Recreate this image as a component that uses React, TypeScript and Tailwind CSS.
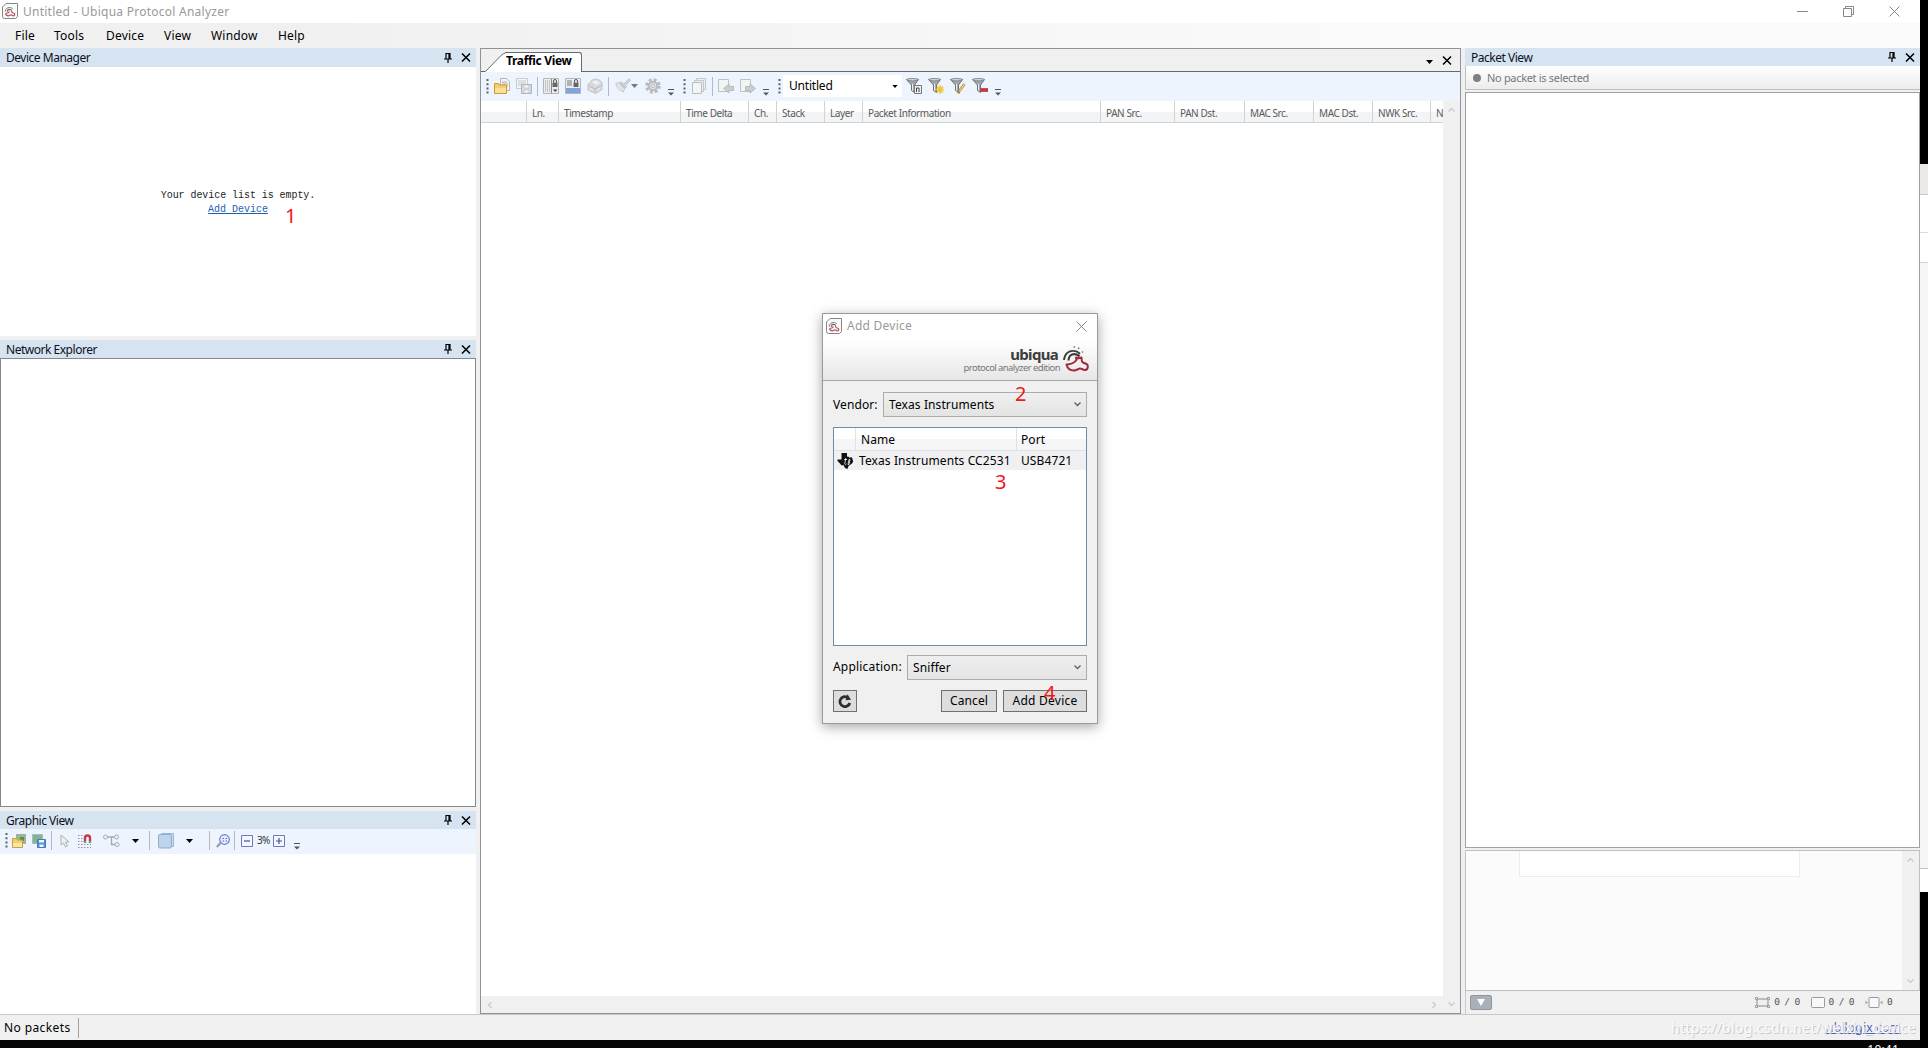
import type { ReactNode } from "react";
import { clsx } from "clsx";

// ─── Data ───────────────────────────────────────────────────────────────────

const MENU = [
  { label: "File", className: "w-[39px]" },
  { label: "Tools", className: "w-[52px]" },
  { label: "Device", className: "w-[58px]" },
  { label: "View", className: "w-[47px]" },
  { label: "Window", className: "w-[67px]" },
  { label: "Help", className: "w-[40px]" },
];

const COLUMNS = [
  { label: "", className: "w-[46px]" },
  { label: "Ln.", className: "w-[32px]" },
  { label: "Timestamp", className: "w-[122px]" },
  { label: "Time Delta", className: "w-[68px]" },
  { label: "Ch.", className: "w-[28px]" },
  { label: "Stack", className: "w-[48px]" },
  { label: "Layer", className: "w-[38px]" },
  { label: "Packet Information", className: "w-[238px]" },
  { label: "PAN Src.", className: "w-[74px]" },
  { label: "PAN Dst.", className: "w-[70px]" },
  { label: "MAC Src.", className: "w-[69px]" },
  { label: "MAC Dst.", className: "w-[59px]" },
  { label: "NWK Src.", className: "w-[58px]" },
];

// ─── Icons ──────────────────────────────────────────────────────────────────

function Svg({
  w = 16,
  h = 16,
  className,
  children,
}: {
  w?: number;
  h?: number;
  className?: string;
  children: ReactNode;
}) {
  return (
    <svg
      width={w}
      height={h}
      viewBox={`0 0 ${String(w)} ${String(h)}`}
      fill="none"
      className={clsx("block shrink-0", className)}
    >
      {children}
    </svg>
  );
}

function AppIcon() {
  return (
    <Svg>
      <path d="M4 .5h11.500v13l-2 2h-11a2 2 0 0 1-2-2V4z" fill="#fafafa" stroke="#8a8284" />
      <path d="M3.200 8.500c.3-2.500 2-4 4.300-4 1.500 0 2.500.5 3.300 1.500" stroke="#777" />
      <path d="M5.300 8.800c0-1.500 1-2.500 2.300-2.500 1 0 1.700.5 2 1.200" stroke="#666" strokeWidth="1.200" />
      <path
        d="M3.500 10.500c2 0 3-.3 4-1.800M9.500 7.500c.2 1.200 0 1.700 1 2.200l1.800.8c.8.600.5 2.300-.8 2.300-1.200 0-1.500-1-2.500-1s-1.500 1-2.700 1c-1.500 0-2.500-1-2.800-2.300"
        stroke="#b65562"
        strokeWidth="1.200"
      />
    </Svg>
  );
}

function UbiquaLogo() {
  return (
    <Svg w={28} h={28}>
      <path d="M7.500 3.500h.1M11.500 2h2M16 3l1.500.6M20 6.500l1.500 1.500" stroke="#777" strokeWidth="1.500" strokeDasharray="1.500 1" />
      <path d="M2 15C2.500 8.500 7 5.500 11.500 5.800c3 .1 5 1.200 6.500 3" stroke="#3b3b3b" strokeWidth="1.800" />
      <path d="M6.500 15.500c0-4 2.500-6.300 6-6.300 2.300 0 4 1 5 2.300" stroke="#3b3b3b" strokeWidth="2.200" />
      <path
        d="M4.500 19.500c4.500-.3 7.500-1.300 10-4.500l-.5-2.500c1.500.8 3.500.8 5.500 0 .5 2-.5 4 1.500 5l3.500 1.500c2.200 1.200 1.700 5.500-1.300 6-2.500.3-3.200-1.500-5.200-1.500s-3 2-6 2c-4 0-6.500-2-7.500-6z"
        stroke="#a02838"
        strokeWidth="2"
        strokeLinejoin="round"
      />
    </Svg>
  );
}

function PinIcon() {
  return (
    <Svg w={8} h={10} className="mr-[9px]">
      <path d="M2 .5h4v5M2 0v6M0 6h8M4 6v4M5 .5v5" stroke="#000" strokeWidth="1.200" />
    </Svg>
  );
}

function CloseIcon() {
  return (
    <Svg w={10} h={9}>
      <path d="M1 .5l8 8M9 .5l-8 8" stroke="#000" strokeWidth="1.500" />
    </Svg>
  );
}

function Grip({ className }: { className?: string }) {
  return (
    <Svg w={3} h={15} className={className}>
      <path d="M1.500 0v15" stroke="#5d626a" strokeWidth="2" strokeDasharray="2 2.200" />
    </Svg>
  );
}

function Overflow({ className }: { className?: string }) {
  return (
    <Svg w={6} h={7} className={clsx("mt-3", className)}>
      <path d="M0 .5h6" stroke="#555" />
      <path d="M0 3.500h6L3 6.500z" fill="#555" />
    </Svg>
  );
}

function Divider({ className }: { className?: string }) {
  return <div className={clsx("h-[19px] w-px shrink-0 bg-[#b5b9c0]", className)} />;
}

function Caret({ className, color = "#000" }: { className?: string; color?: string }) {
  return (
    <Svg w={7} h={4} className={className}>
      <path d="M0 0h7L3.500 4z" fill={color} />
    </Svg>
  );
}

function OpenIcon() {
  return (
    <Svg className="mr-[6px]">
      <path d="M6.500.5h6l3 3v9h-9z" fill="#f4f4f4" stroke="#b4b4b4" />
      <path d="M8 4h5M8 6h6M8 8h6" stroke="#aaa" />
      <path d="M.5 5.500h4l1 1.500h7v8.500H.5z" fill="#f3ce6b" stroke="#cf9a36" />
      <path d="M1 10h11v5H1z" fill="#fae096" />
    </Svg>
  );
}

function SaveAllIcon() {
  return (
    <Svg className="opacity-70">
      <path d="M.5.5h11v10H.5z" fill="#f5f5f5" stroke="#bbb" />
      <path d="M2 3h8M2 5h8M2 7h8" stroke="#b5b5b5" />
      <path d="M5.500 6.500h10v9h-10z" fill="#cfd2d6" stroke="#999" />
      <path d="M8 7h5v3H8zM8 12h5v3H8z" fill="#f5f5f5" stroke="#aaa" strokeWidth=".6" />
    </Svg>
  );
}

function LockColumnIcon() {
  return (
    <Svg className="mr-[6px]">
      <path d="M.5.5h15v15H.5z" fill="#ededed" stroke="#b5b5b5" />
      <path d="M2 3h5M2 5h5M2 7h5M2 9h5M2 11h5M2 13h5" stroke="#999" strokeDasharray="1 1" />
      <path d="M8.500 1v14" stroke="#888" />
      <path d="M10.500 4.500V3a1.500 1.500 0 0 1 3 0v1.500" stroke="#555" />
      <path d="M9.500 4.500h5V9h-5z" fill="#666" />
      <path d="M10 11.500h4.500L12.200 14z" fill="#444" />
    </Svg>
  );
}

function LockRowIcon() {
  return (
    <Svg className="mr-[6px]">
      <path d="M.5.5h15v15H.5z" fill="#ededed" stroke="#b5b5b5" />
      <path d="M2 3h5M2 5h5M2 7h5" stroke="#777" />
      <path d="M1 10h14v5H1z" fill="#7ea6dc" />
      <path d="M9.500 4.500V3a1.500 1.500 0 0 1 3 0v1.500" stroke="#555" />
      <path d="M8.500 4.500h5V9h-5z" fill="#666" />
    </Svg>
  );
}

function EraseIcon() {
  return (
    <Svg className="opacity-70">
      <path d="M1 7c0-2 3-3 3.500-4.500C7 .5 12 1 13.500 3c2 1 2 3 1.500 5v3.500L8.500 15.500 1 12z" fill="#cfcfcf" stroke="#b0b0b0" />
      <path d="M5 4l4-1.500L13 5 9 7z" fill="#f2f2f2" />
      <path d="M2 8l6 3 6.500-3.500M8 11v4" stroke="#a4a4a4" />
      <path d="M3 10.500l3 1.500M10 12l3-2" stroke="#eee" />
    </Svg>
  );
}

function BrushIcon() {
  return (
    <Svg className="opacity-70">
      <path d="M.8 5.500l4-1 5 5-1.500 4.500C4.500 12.500 1.500 9.500.8 5.500z" fill="#e8e8e8" stroke="#b5b5b5" />
      <path d="M3 7l4.500 5M5 6l4 4.500" stroke="#b8b8b8" strokeWidth=".8" />
      <path d="M6.500 4l5 5-1.800 1.500-5-5z" fill="#bdbdbd" stroke="#a0a0a0" strokeWidth=".8" />
      <path d="M9 6l5-5.200 1.500 1.500-5 5.200" fill="#ccc" stroke="#aaa" />
    </Svg>
  );
}

function GearIcon() {
  return (
    <Svg className="opacity-70">
      <circle cx="8" cy="8" r="6.300" stroke="#a2a2a2" strokeWidth="2.800" strokeDasharray="2.800 2.150" />
      <circle cx="8" cy="8" r="4.300" fill="#d4d4d4" stroke="#a2a2a2" strokeWidth="2" />
      <circle cx="8" cy="8" r="1.600" fill="#f8f8f8" stroke="#a0a0a0" />
    </Svg>
  );
}

function CopyIcon() {
  return (
    <Svg w={15} className="opacity-80">
      <path d="M4.500.5h9v11h-9z" fill="#ececec" stroke="#bbb" />
      <path d="M2.500 2.500h9v11h-9z" fill="#ececec" stroke="#bbb" />
      <path d="M.5 4.500h9v11h-9z" fill="#f5f5f5" stroke="#b0b0b0" />
    </Svg>
  );
}

function PageArrowIcon({ flip, className }: { flip?: boolean; className?: string }) {
  return (
    <Svg className={clsx("opacity-80", className)}>
      <path d="M.5 1.500h10v12H.5z" fill="#f4f4f4" stroke="#b5b5b5" />
      <path
        d={flip ? "M5.500 8.500H10V6l5.500 4.500L10 15v-2.500H5.500z" : "M15.500 8.500H11V6l-5.500 4.500L11 15v-2.500h4.500z"}
        fill="#c4c4c4"
        stroke="#a0a0a0"
        strokeWidth=".8"
      />
    </Svg>
  );
}

function FilterIcon({ kind }: { kind: "name" | "new" | "edit" | "remove" }) {
  return (
    <Svg className="mr-[6px]">
      <path d="M.5 1.500h12L8.500 7v7.500l-3-2V7z" fill="#a4a8ac" stroke="#6e7276" />
      <path d="M6.500 6v6.500" stroke="#ececec" />
      <ellipse cx="6.500" cy="1.700" rx="6" ry="1.200" fill="#d4d6d8" stroke="#6e7276" strokeWidth=".8" />
      {kind === "name" && (
        <>
          <path d="M8.500 7.500h7v8h-7z" fill="#f0f0f0" stroke="#777" />
          <path d="M10.500 14v-4h2.500v4" stroke="#444" />
        </>
      )}
      {kind === "new" && (
        <path d="M12 7v9M7.500 11.500h9M9 8.500l6 6M15 8.500l-6 6" stroke="#f0c73c" strokeWidth="1.600" />
      )}
      {kind === "edit" && (
        <>
          <path d="M14.500 6l-5.500 7.500-.5 2" stroke="#a8893c" strokeWidth="2.600" />
          <path d="M14.500 6L9.500 13" stroke="#f4dd86" strokeWidth="1.200" />
        </>
      )}
      {kind === "remove" && <path d="M9 10.500h7v3H9z" fill="#d8323c" stroke="#b02430" strokeWidth=".6" />}
    </Svg>
  );
}

function Chevron({ className, d = "M.5 4.500L3.500 1.500l3 3" }: { className?: string; d?: string }) {
  return (
    <Svg w={7} h={6} className={className}>
      <path d={d} stroke="#c8c8c8" strokeWidth="1.200" />
    </Svg>
  );
}

function TexasIcon() {
  return (
    <Svg w={17} h={16}>
      <path
        d="M4.500 0H10v3.500l5 1 1.200 4-1.200 2-3.500 2.500-1 3-2.500-1-1.500-3-2 .5-1.500-2L.5 8V6.500h4z"
        fill="#111"
      />
      <path d="M7 6.500h3M8.800 5l-1 5.500c0 1.200.8 1.200 1.500.6M12 6.500l-1 5h1l1-5zM12.300 4.500h1" stroke="#fff" strokeWidth=".8" />
    </Svg>
  );
}

// ─── Shared pieces ──────────────────────────────────────────────────────────

function PanelHeader({ title, tall }: { title: string; tall?: boolean }) {
  return (
    <div
      className={clsx(
        "flex shrink-0 items-center bg-[#d6e3f1] pr-[5px] pl-[6px]",
        tall ? "h-[19px]" : "h-[18px]",
      )}
    >
      <span className="flex-1 pt-px text-[12px] leading-[18px] tracking-[-0.48px] whitespace-nowrap text-[#0c1020]">
        {title}
      </span>
      <PinIcon />
      <CloseIcon />
    </div>
  );
}

function Select({ value, className }: { value: string; className?: string }) {
  return (
    <div
      className={clsx(
        "flex h-[25px] items-center justify-between border border-[#acacac] bg-linear-to-b from-[#efefef] to-[#e4e4e4] pr-[5px] pl-[5px]",
        className,
      )}
    >
      <span>{value}</span>
      <Svg w={7} h={6} className="-mt-[2px]">
        <path d="M.5 1.500l3 3 3-3" stroke="#606060" strokeWidth="1.300" />
      </Svg>
    </div>
  );
}

function Mark({ n, className }: { n: number; className: string }) {
  return (
    <span className={clsx("absolute z-20 text-[20px] leading-none text-[#f01818]", className)}>
      {n}
    </span>
  );
}

// ─── Left column ────────────────────────────────────────────────────────────

function LeftColumn() {
  return (
    <div className="flex w-[476px] shrink-0 flex-col">
      <PanelHeader title="Device Manager" tall />
      <div className="flex h-[269px] flex-col items-center bg-white pt-[121px] font-['Liberation_Mono',monospace] text-[10px] leading-[14px]">
        <p className="pt-px tracking-[-0.06px] text-[#222]">Your device list is empty.</p>
        <p className="text-[#1a62b0] underline">Add Device</p>
      </div>
      <div className="mt-[4px]" />
      <PanelHeader title="Network Explorer" />
      <div className="h-[449px] border border-[#828790] bg-white" />
      <div className="mt-[4px]" />
      <PanelHeader title="Graphic View" />
      <GraphicToolbar />
      <div className="flex-1 bg-white" />
    </div>
  );
}

function GraphicToolbar() {
  return (
    <div className="flex h-[25px] shrink-0 items-center bg-[#eef4fd] pb-[2px] pl-[5px]">
      <Grip className="mr-[4px]" />
      <Svg w={14} h={14} className="mr-[6px]">
        <path d="M4.500.5h9v9h-9z" fill="#8fc08a" stroke="#a8a8a8" />
        <path d="M8 3h4v4H8z" fill="#4c8b66" />
        <path d="M.5 4.500h4l1 1.500h5v7.500H.5z" fill="#f3ce6b" stroke="#c99e42" />
        <path d="M1 9h9v4H1z" fill="#fbe7a4" />
      </Svg>
      <Svg w={14} h={14}>
        <path d="M.5.500h10v9H.5z" fill="#7fb78c" stroke="#a8b8c8" />
        <path d="M5.500 5.500h8v8h-8z" fill="#5b8ed0" stroke="#4a78b4" />
        <path d="M7 6h5v2.500H7zM7.500 10.500h4V13h-4z" fill="#eef6ff" />
      </Svg>
      <Divider className="ml-[5px]" />
      <Svg w={10} h={14} className="ml-[8px]">
        <path d="M1 1v10l2.500-2 2 4 2-1-2-4H9z" fill="#f0f0f0" stroke="#b0b0b0" />
      </Svg>
      <Svg w={14} h={14} className="ml-[8px]">
        <path d="M0 1.500h6M0 4.500h5M0 7.500h6M0 10.500h13M0 13.500h13" stroke="#8a94a4" strokeDasharray="1.500 1.500" />
        <path d="M7 7V4a2.500 2.500 0 0 1 5 0v3" stroke="#c03a48" strokeWidth="2.400" />
        <path d="M5.800 8h2.400M10.800 8h2.400" stroke="#888" strokeWidth="1.800" />
      </Svg>
      <Svg w={17} h={14} className="ml-[11px]">
        <circle cx="2.500" cy="3" r="2" stroke="#a8a8a8" />
        <circle cx="13.500" cy="3" r="2" stroke="#a8a8a8" />
        <circle cx="14" cy="10.500" r="2" stroke="#a8a8a8" />
        <path d="M4.500 3h7M8.500 3v7.500H12" stroke="#a8a8a8" strokeWidth="1.300" />
      </Svg>
      <Caret className="ml-[12px]" />
      <Divider className="ml-[10px]" />
      <Svg className="ml-[8px]">
        <path d="M3.500.5h12v13h-12z" fill="#c8dcf0" stroke="#9cb8d6" />
        <rect x=".5" y="1.500" width="13" height="13.500" rx="1.500" fill="#bcd4ec" stroke="#8eaccc" />
      </Svg>
      <Caret className="ml-[12px]" />
      <Divider className="ml-[16px]" />
      <Svg w={14} h={14} className="ml-[6px]">
        <circle cx="8.500" cy="5.500" r="4.800" fill="#e4ecff" stroke="#6f80cc" strokeWidth="1.200" />
        <path d="M6.500 4.500h1.500M9.500 4.500H11M6.500 7h1.500M9.500 7H11" stroke="#5a6cc0" />
        <path d="M4.500 9L.8 13" stroke="#9a9aa8" strokeWidth="2.200" />
      </Svg>
      <Divider className="ml-[4px]" />
      <Svg w={12} h={12} className="ml-[6px]">
        <path d="M.5.5h11v11H.5z" fill="#f4f7ff" stroke="#6d78c0" />
        <path d="M3 6h6" stroke="#4450a0" strokeWidth="1.200" />
      </Svg>
      <span className="ml-[4px] w-[12px] text-[10px] tracking-[-0.8px] text-[#333]">3%</span>
      <Svg w={12} h={12} className="ml-[4px]">
        <path d="M.5.5h11v11H.5z" fill="#f4f7ff" stroke="#6d78c0" />
        <path d="M3 6h6M6 3v6" stroke="#4450a0" strokeWidth="1.200" />
      </Svg>
      <Overflow className="ml-[9px]" />
    </div>
  );
}

// ─── Traffic view ───────────────────────────────────────────────────────────

function TrafficToolbar() {
  return (
    <div className="flex h-[29px] shrink-0 items-center bg-[#edf4fd] pb-px pl-[5px]">
      <Grip className="mr-[5px]" />
      <OpenIcon />
      <SaveAllIcon />
      <Divider className="mr-[5px] ml-[5px]" />
      <LockColumnIcon />
      <LockRowIcon />
      <EraseIcon />
      <Divider className="mr-[6px] ml-[5px]" />
      <BrushIcon />
      <Caret className="mr-[7px]" color="#777" />
      <GearIcon />
      <Overflow className="ml-[7px]" />
      <Grip className="mr-[6px] ml-[9px]" />
      <CopyIcon />
      <Divider className="mr-[5px] ml-[5px]" />
      <PageArrowIcon className="mr-[6px]" />
      <PageArrowIcon flip />
      <Overflow className="ml-[7px]" />
      <Grip className="ml-[9px]" />
      <div className="mr-[4px] ml-[2px] flex h-[22px] w-[119px] items-center justify-between bg-white pr-[4px] pl-[6px] text-[12px] tracking-[-0.2px]">
        <span>Untitled</span>
        <Caret className="h-[3px] w-[6px]" />
      </div>
      <FilterIcon kind="name" />
      <FilterIcon kind="new" />
      <FilterIcon kind="edit" />
      <FilterIcon kind="remove" />
      <Overflow className="ml-[1px]" />
    </div>
  );
}

function TrafficView() {
  return (
    <div className="ml-[4px] flex w-[981px] shrink-0 flex-col border border-[#8f9399] bg-white">
      <div className="flex h-[23px] shrink-0 items-end justify-between bg-[#f0f0f0]">
        <div className="flex h-[20px] items-end">
          <Svg w={24} h={20}>
            <path d="M0 19.500h4.500L20 3.500q2.500-2.500 5-2.500v19H0z" fill="#fff" />
            <path d="M0 19.500h4.500L20 3.500q2.500-2.500 5-2.500" stroke="#646a74" />
          </Svg>
          <div className="h-[20px] w-[77px] rounded-tr-[3px] border-t border-r border-[#646a74] bg-white pl-[1px] text-[12px] leading-[16px] font-bold tracking-[-0.33px] whitespace-nowrap">
            Traffic View
          </div>
        </div>
        <div className="flex h-[23px] flex-1 items-center justify-end border-b border-[#646a74] pr-[8px]">
          <Caret className="mt-1 mr-[9px]" />
          <CloseIcon />
        </div>
      </div>
      <TrafficToolbar />
      <div className="flex min-h-0 flex-1">
        <div className="flex w-[962px] flex-col">
          <div className="flex h-[22px] shrink-0 overflow-hidden border-b border-[#d0d3d6] bg-linear-to-b from-white from-50% to-[#f3f4f5] to-50%">
            {COLUMNS.map((col, i) => (
              <div
                key={i}
                className={clsx(
                  "shrink-0 border-r border-[#d0d3d6] pl-[5px] text-[10px] leading-[24px] tracking-[-0.42px] whitespace-nowrap text-[#5a5a5a]",
                  col.className,
                )}
              >
                {col.label}
              </div>
            ))}
            <span className="pl-[5px] text-[10px] leading-[24px] text-[#5a5a5a]">N</span>
          </div>
          <div className="flex-1" />
          <div className="flex h-[17px] shrink-0 items-center justify-between bg-[#f0f0f0] px-[6px]">
            <Chevron d="M4.500 0l-3 3 3 3" />
            <Chevron d="M2.500 0l3 3-3 3" />
          </div>
        </div>
        <div className="flex flex-1 flex-col items-center justify-between bg-[#f0f0f0] pt-[6px] pb-[6px]">
          <Chevron />
          <Chevron d="M.5 1.500l3 3 3-3" />
        </div>
      </div>
    </div>
  );
}

// ─── Packet view ────────────────────────────────────────────────────────────

function Counter({ icon, text }: { icon: ReactNode; text: string }) {
  return (
    <div className="flex items-center gap-[4px]">
      {icon}
      <span>{text}</span>
    </div>
  );
}

function PacketView() {
  return (
    <div className="ml-[4px] flex min-w-0 flex-1 flex-col">
      <PanelHeader title="Packet View" />
      <div className="flex h-[24px] shrink-0 items-center border-b border-l border-[#c0c0c0] bg-linear-to-b from-white to-[#ececec] pl-[7px]">
        <div className="mr-[6px] size-[8px] rounded-full bg-[#808080]" />
        <span className="pt-px text-[11px] tracking-[-0.32px] text-[#777]">No packet is selected</span>
      </div>
      <div className="mt-[2px] h-[756px] shrink-0 border border-[#a0a0a0] bg-white" />
      <div className="mt-[2px] flex h-[141px] shrink-0 border border-[#c0c0c0] bg-[#fbfbfb]">
        <div className="flex-1">
          <div className="ml-[53px] h-[26px] w-[281px] border border-t-0 border-[#ececec] bg-white" />
        </div>
        <div className="flex w-[17px] flex-col items-center justify-between bg-[#f0f0f0] py-[6px]">
          <Chevron />
          <Chevron d="M.5 1.500l3 3 3-3" />
        </div>
      </div>
      <div className="flex flex-1 items-center border-l border-[#c8c8c8] bg-[#f0f0f0] pr-[28px] pb-px pl-[4px]">
        <div className="flex h-[15px] w-[22px] items-center justify-center rounded-[2px] border border-[#8f969d] bg-[#a9b0b7]">
          <Svg w={8} h={7}>
            <path d="M0 0h8L4 7z" fill="#fff" />
          </Svg>
        </div>
        <div className="flex flex-1 justify-end gap-[11px] font-['DejaVu_Sans_Mono',monospace] text-[9.500px] tracking-[-0.65px] whitespace-nowrap text-[#555]">
          <Counter
            text="0 / 0"
            icon={
              <Svg w={15} h={11}>
                <path d="M2 2h11v7H2z" stroke="#888" />
                <path d="M.5.5h2v2h-2zM12.500.5h2v2h-2zM.5 8.500h2v2h-2zM12.500 8.500h2v2h-2z" fill="#fff" stroke="#999" />
              </Svg>
            }
          />
          <Counter
            text="0 / 0"
            icon={
              <Svg w={14} h={11}>
                <rect x=".5" y=".5" width="13" height="10" rx="1" fill="#f8f8f8" stroke="#999" />
              </Svg>
            }
          />
          <Counter
            text="0"
            icon={
              <Svg w={18} h={11}>
                <rect x="4" y=".5" width="10" height="10" rx="1" fill="#f8f8f8" stroke="#999" />
                <path d="M.5 3.500L3 5.500l-2.500 2zM17.500 3.500L15 5.500l2.500 2z" fill="#aaa" />
              </Svg>
            }
          />
        </div>
      </div>
    </div>
  );
}

// ─── Add Device dialog ──────────────────────────────────────────────────────

function DialogButton({ children, className }: { children: ReactNode; className: string }) {
  return (
    <button
      type="button"
      className={clsx(
        "flex h-[22px] items-center justify-center border border-[#707070] bg-[#dddddd] pb-px",
        className,
      )}
    >
      {children}
    </button>
  );
}

function AddDeviceDialog() {
  return (
    <div className="absolute top-[313px] left-[822px] z-10 h-[411px] w-[276px] border border-[#9a9a9a] bg-[#f0f0f0] text-[12px] tracking-[0.1px] whitespace-nowrap text-black shadow-[0_3px_12px_rgba(0,0,0,0.35)]">
      <div className="h-[67px] border-b border-[#a8a8a8] bg-linear-to-b from-white from-40% to-[#e6e6e6]">
        <div className="flex h-[24px] items-center pr-[10px] pl-[3px]">
          <AppIcon />
          <span className="ml-[5px] flex-1 tracking-[0.25px] text-[#999]">Add Device</span>
          <Svg w={11} h={11}>
            <path d="M.5.5l10 10M10.500.5l-10 10" stroke="#888" />
          </Svg>
        </div>
        <div className="flex h-[41px] items-center justify-end pr-[7px]">
          <div className="flex flex-col items-end pt-[2px]">
            <span className="mr-[2px] text-[15px] leading-[16px] font-bold tracking-[-0.7px] text-[#3d3d3d]">
              ubiqua
            </span>
            <span className="text-[9.500px] leading-[12px] tracking-[-0.58px] text-[#777]">
              protocol analyzer edition
            </span>
          </div>
          <div className="ml-[2px]">
            <UbiquaLogo />
          </div>
        </div>
      </div>

      <div className="mx-[10px] mt-[11px] flex items-center justify-between">
        <span>Vendor:</span>
        <Select value="Texas Instruments" className="w-[204px]" />
      </div>

      <div className="mx-[10px] mt-[10px] h-[219px] border border-[#6d8bab] bg-white">
        <div className="flex h-[23px] border-b border-[#dfe1e4] bg-linear-to-b from-white from-50% to-[#f4f5f7] to-50% leading-[23px]">
          <div className="w-[22px] border-r border-[#e0e3e6]" />
          <div className="w-[161px] border-r border-[#e0e3e6] pl-[5px]">Name</div>
          <div className="pl-[4px]">Port</div>
        </div>
        <div className="flex h-[19px] items-center bg-[#f0f0f2]">
          <div className="w-[25px] pl-[3px]">
            <TexasIcon />
          </div>
          <div className="w-[162px]">Texas Instruments CC2531</div>
          <div>USB4721</div>
        </div>
      </div>

      <div className="mx-[10px] mt-[9px] flex items-center justify-between">
        <span className="pb-[2px] tracking-[0.2px]">Application:</span>
        <Select value="Sniffer" className="w-[180px]" />
      </div>

      <div className="mx-[10px] mt-[10px] flex">
        <DialogButton className="mr-auto w-[24px]">
          <Svg w={14} h={14}>
            <path d="M11.800 9A5 5 0 1 1 9.500 3.300" stroke="#2e2e2e" strokeWidth="2.800" />
            <path d="M7.500 6.200L13 5.800 9.500.2z" fill="#2e2e2e" />
          </Svg>
        </DialogButton>
        <DialogButton className="mr-[6px] w-[56px]">Cancel</DialogButton>
        <DialogButton className="w-[84px] tracking-[0.25px]">Add Device</DialogButton>
      </div>
    </div>
  );
}

// ─── App ────────────────────────────────────────────────────────────────────

export default function App() {
  return (
    <div className="relative flex h-[1048px] w-[1928px] overflow-hidden bg-black font-['Noto_Sans','Open_Sans',sans-serif]">
      <div className="flex w-[1920px] flex-col bg-[#f0f0f0]">
        {/* Title bar */}
        <div className="flex h-[23px] shrink-0 items-center bg-white pr-[20px] pb-px pl-[2px]">
          <AppIcon />
          <span className="ml-[5px] flex-1 pt-px text-[12px] tracking-[0.25px] text-[#999]">
            Untitled - Ubiqua Protocol Analyzer
          </span>
          <Svg w={11} h={11}>
            <path d="M0 5.500h11" stroke="#888" />
          </Svg>
          <Svg w={11} h={11} className="mx-[35px]">
            <path d="M.5 2.500h8v8h-8zM2.500 2.500v-2h8v8h-2" stroke="#888" />
          </Svg>
          <Svg w={11} h={11}>
            <path d="M.5.5l10 10M10.500.5l-10 10" stroke="#888" />
          </Svg>
        </div>

        {/* Menu */}
        <div className="flex h-[25px] shrink-0 items-center bg-linear-to-r from-[#f0f0f0] from-15% to-[#fafafa] to-70% pl-[15px] text-[12px] tracking-[0.2px]">
          {MENU.map((item) => (
            <span key={item.label} className={clsx("shrink-0", item.className)}>
              {item.label}
            </span>
          ))}
        </div>

        {/* Docked panels */}
        <div className="flex h-[966px] shrink-0">
          <LeftColumn />
          <TrafficView />
          <PacketView />
        </div>

        {/* Status bar */}
        <div className="flex h-[26px] shrink-0 items-center justify-between border-t border-[#c8c8c8] pr-[19px] pl-[4px]">
          <div className="flex h-[20px] w-[75px] items-center border-r border-[#a0a0a0] text-[12px] tracking-[0.4px]">
            No packets
          </div>
          <a className="text-[12px] tracking-[0.2px] text-[#4a62b8] underline">ubilogix.com</a>
        </div>
        <div className="flex flex-1 justify-end overflow-hidden bg-[#060606] pr-[21px]">
          <span className="pt-[3px] text-[12px] leading-[14px] tracking-[0.2px] text-white">10:41</span>
        </div>
      </div>

      {/* Slice of the window behind */}
      <div className="flex flex-1 flex-col">
        <div className="h-[164px] bg-black" />
        <div className="h-[31px] border-b border-[#c8c8c8] bg-[#ebeae9]" />
        <div className="h-[38px] border-b border-[#dcdcdc] bg-white" />
        <div className="h-[30px] border-b border-[#d4d4d4] bg-white" />
        <div className="h-[606px] border-b border-[#c4c4c4] bg-[#f5f5f5]" />
        <div className="h-[23px] bg-white" />
        <div className="flex-1 bg-black" />
      </div>

      <AddDeviceDialog />

      <span className="absolute top-[1018px] left-[1671px] w-[249px] overflow-hidden text-[14px] leading-[20px] tracking-[0.35px] whitespace-nowrap text-[#fbfbfb] [text-shadow:1px_1px_0_#c8c8c8]">
        https://blog.csdn.net/weixin_device
      </span>

      <Mark n={1} className="top-[206px] left-[285px]" />
      <Mark n={2} className="top-[384px] left-[1015px]" />
      <Mark n={3} className="top-[472px] left-[995px]" />
      <Mark n={4} className="top-[683px] left-[1044px]" />
    </div>
  );
}
